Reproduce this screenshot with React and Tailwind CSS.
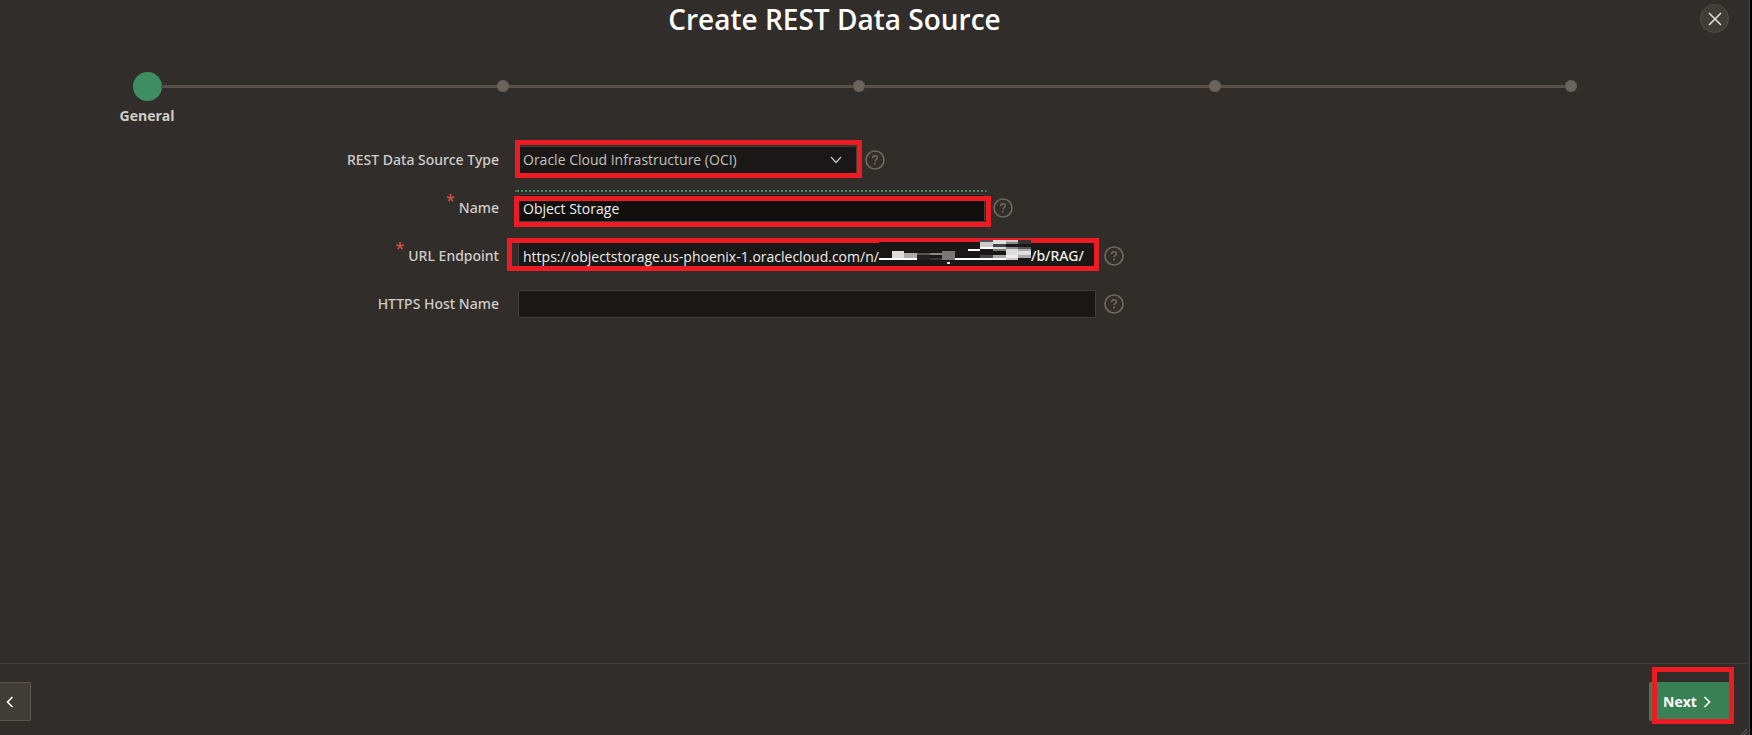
import React from "react";

const field = "h-7 rounded-xs border border-[#43403c] px-1 text-sm font-medium outline-none";

function Highlight({ className }) {
  return <div aria-hidden="true" className={"pointer-events-none absolute border-5 border-[#ed1c24] " + className} />;
}

function Help({ label }) {
  return (
    <button type="button" aria-label={"Help for " + label} className="size-5 text-[#6f6963]">
      <svg viewBox="0 0 20 20" className="size-5" fill="none" stroke="currentColor">
        <circle cx="10" cy="10" r="9" strokeWidth="1.6" />
        <path d="M7.6 8.2c0-1.5 1-2.4 2.4-2.4s2.4.9 2.4 2.1c0 1.6-2.4 1.7-2.4 3.6" strokeWidth="1.5" />
        <path d="M10 12.8v1.6" strokeWidth="1.7" />
      </svg>
    </button>
  );
}

function Row({ id, label, required, children }) {
  return (
    <div className="flex h-12 items-center">
      <label htmlFor={id} className="flex w-[499px] shrink-0 justify-end font-['Noto_Sans',sans-serif] text-sm font-medium text-[#d0cdc9]">
        {required && <span className="-mt-2 mr-1 text-base leading-5 text-[#d9503f]">*</span>}
        {label}
      </label>
      <div className="ml-[19px] flex items-center gap-2">{children}</div>
    </div>
  );
}

const blocks = [
  [0, 2, 101, 23, "#191816"], [101, 0, 51, 25, "#191816"],
  [0, 18, 38, 2, "#fff"], [13, 11, 12, 7, "#dedcdd"], [25, 13, 13, 5, "#aaa"],
  [38, 13, 13, 2, "#555"], [38, 15, 13, 5, "#222"], [51, 13, 12, 2, "#888"], [51, 18, 12, 2, "#333"],
  [63, 11, 13, 9, "#777"], [68, 22, 3, 2, "#ddd"], [76, 18, 51, 2, "#fff"], [89, 9, 12, 2, "#fff"],
  [101, 0, 13, 2, "#555"], [101, 2, 13, 5, "#ccc"], [101, 7, 13, 2, "#fff"], [101, 15, 13, 3, "#444"],
  [114, 0, 13, 4, "#ddd"], [114, 4, 13, 3, "#444"], [114, 7, 13, 2, "#ddd"], [114, 9, 13, 2, "#777"], [114, 15, 13, 3, "#aaa"],
  [127, 0, 12, 2, "#ccc"], [127, 2, 12, 2, "#888"], [127, 7, 12, 2, "#888"], [127, 9, 12, 6, "#ddd"], [127, 15, 12, 3, "#eee"], [127, 18, 12, 2, "#ccc"],
  [139, 0, 13, 4, "#333"], [139, 7, 13, 2, "#555"], [139, 9, 13, 2, "#aaa"], [139, 11, 13, 4, "#ddd"], [139, 15, 13, 3, "#aaa"],
];

function Mosaic() {
  return (
    <svg aria-hidden="true" viewBox="0 0 152 25" shapeRendering="crispEdges" className="absolute -top-0.5 left-[361px] h-[25px] w-[152px]">
      {blocks.map(([x, y, w, h, c], i) => (
        <rect key={i} x={x} y={y} width={w} height={h} fill={c} />
      ))}
    </svg>
  );
}

export default function App() {
  return (
    <div className="flex min-h-screen bg-black font-['Open_Sans',sans-serif]">
      <main className="relative flex grow flex-col border-r border-[#4b4844] bg-[#312d2a]">
        <header className="relative flex h-[71px] justify-center pr-20">
          <h1 className="text-[28px] leading-[38px] font-semibold text-white">Create REST Data Source</h1>
          <button type="button" aria-label="Close" className="absolute top-1 right-5 flex size-[29px] items-center justify-center rounded-full border border-[#514e49] bg-[#403c38] text-[#dedbd8]">
            <svg viewBox="0 0 14 14" className="size-3.5" stroke="currentColor" strokeWidth="1.6">
              <path d="M1 1l12 12M13 1L1 13" />
            </svg>
          </button>
        </header>

        <nav aria-label="Progress" className="pr-[172px] pl-[141px]">
          <ol className="flex items-center">
            <li className="flex h-[30px] w-3 shrink-0 items-center justify-center" aria-current="step">
              <div className="size-[29px] shrink-0 rounded-full bg-[#3e8e61]" />
            </li>
            {[2, 3, 4, 5].map((n) => (
              <li key={n} className="flex flex-1 items-center">
                <div className={n === 2 ? "ml-2 h-[3px] grow bg-[#575049]" : "h-[3px] grow bg-[#575049]"} />
                <div className="size-3 rounded-full bg-[#6b645e]" />
              </li>
            ))}
          </ol>
          <p className="-ml-6 w-15 pt-[5px] text-center text-sm font-bold text-[#d0cdc9]">General</p>
        </nav>

        <form className="grow pt-2.5">
          <Row id="type" label="REST Data Source Type">
            <div className="relative w-[339px]">
              <select id="type" className={field + " w-full appearance-none bg-[#191816] text-[#c4c1bd]"}>
                <option>Oracle Cloud Infrastructure (OCI)</option>
              </select>
              <svg viewBox="0 0 12 8" className="pointer-events-none absolute top-2.5 right-[15px] h-2 w-3" fill="none" stroke="#c4c1bd" strokeWidth="1.3">
                <path d="M1 1l5 5.5L11 1" />
              </svg>
              <Highlight className="-top-1.5 -left-[3px] h-[38px] w-[347px]" />
            </div>
            <Help label="REST Data Source Type" />
          </Row>
          <Row id="name" label="Name" required>
            <div className="relative w-[467px]">
              <div aria-hidden="true" className="absolute -top-1 -left-[3px] h-3 w-[472px] rounded-xs border-t-2 border-dotted border-[#3e8e61]" />
              <input id="name" className={field + " w-full bg-[#100f0e] text-[#f1efed]"} defaultValue="Object Storage" />
              <Highlight className="top-0.5 -left-1 h-[31px] w-[477px]" />
            </div>
            <Help label="Name" />
          </Row>
          <Row id="url" label="URL Endpoint" required>
            <div className="relative w-[578px]">
              <input id="url" className={field + " w-full bg-[#191816] text-[#f1efed]"} defaultValue="https://objectstorage.us-phoenix-1.oraclecloud.com/n/" />
              <span className="absolute top-1 left-[513px] font-['Noto_Sans',sans-serif] text-sm font-medium text-[#f1efed]">/b/RAG/</span>
              <Highlight className="-top-1 -left-[11px] h-[33px] w-[592px]" />
              <Mosaic />
            </div>
            <Help label="URL Endpoint" />
          </Row>
          <Row id="host" label="HTTPS Host Name">
            <input id="host" className={field + " w-[578px] bg-[#191816] text-[#f1efed]"} />
            <Help label="HTTPS Host Name" />
          </Row>
        </form>

        <footer className="flex h-[72px] items-start justify-between border-t border-[#43403c] pt-[18px] pr-[18px]">
          <button type="button" aria-label="Previous" className="flex h-[39px] w-[31px] items-center rounded-r-xs border border-l-0 border-[#5b5750] bg-[#403c38] pl-1.5 text-white">
            <svg viewBox="0 0 8 12" className="h-3 w-2" fill="none" stroke="currentColor" strokeWidth="1.6">
              <path d="M6.5 1L1.5 6l5 5" />
            </svg>
          </button>
          <div className="relative">
            <button type="button" className="flex h-[39px] w-[82px] items-center gap-1.5 rounded-xs bg-[#3a8055] pl-3.5 text-sm font-bold text-white">
              Next
              <svg viewBox="0 0 8 12" className="h-3 w-2" fill="none" stroke="currentColor" strokeWidth="1.6">
                <path d="M1.5 1l5 5-5 5" />
              </svg>
            </button>
            <Highlight className="-top-[15px] left-[3px] h-[57px] w-[82px]" />
          </div>
        </footer>
        <svg aria-hidden="true" viewBox="0 0 6 6" className="absolute right-0.5 bottom-0 size-1.5" stroke="#6b645e">
          <path d="M0 6L6 0M3 6l3-3" />
        </svg>
      </main>
      <div className="w-0.5 shrink-0" />
    </div>
  );
}
